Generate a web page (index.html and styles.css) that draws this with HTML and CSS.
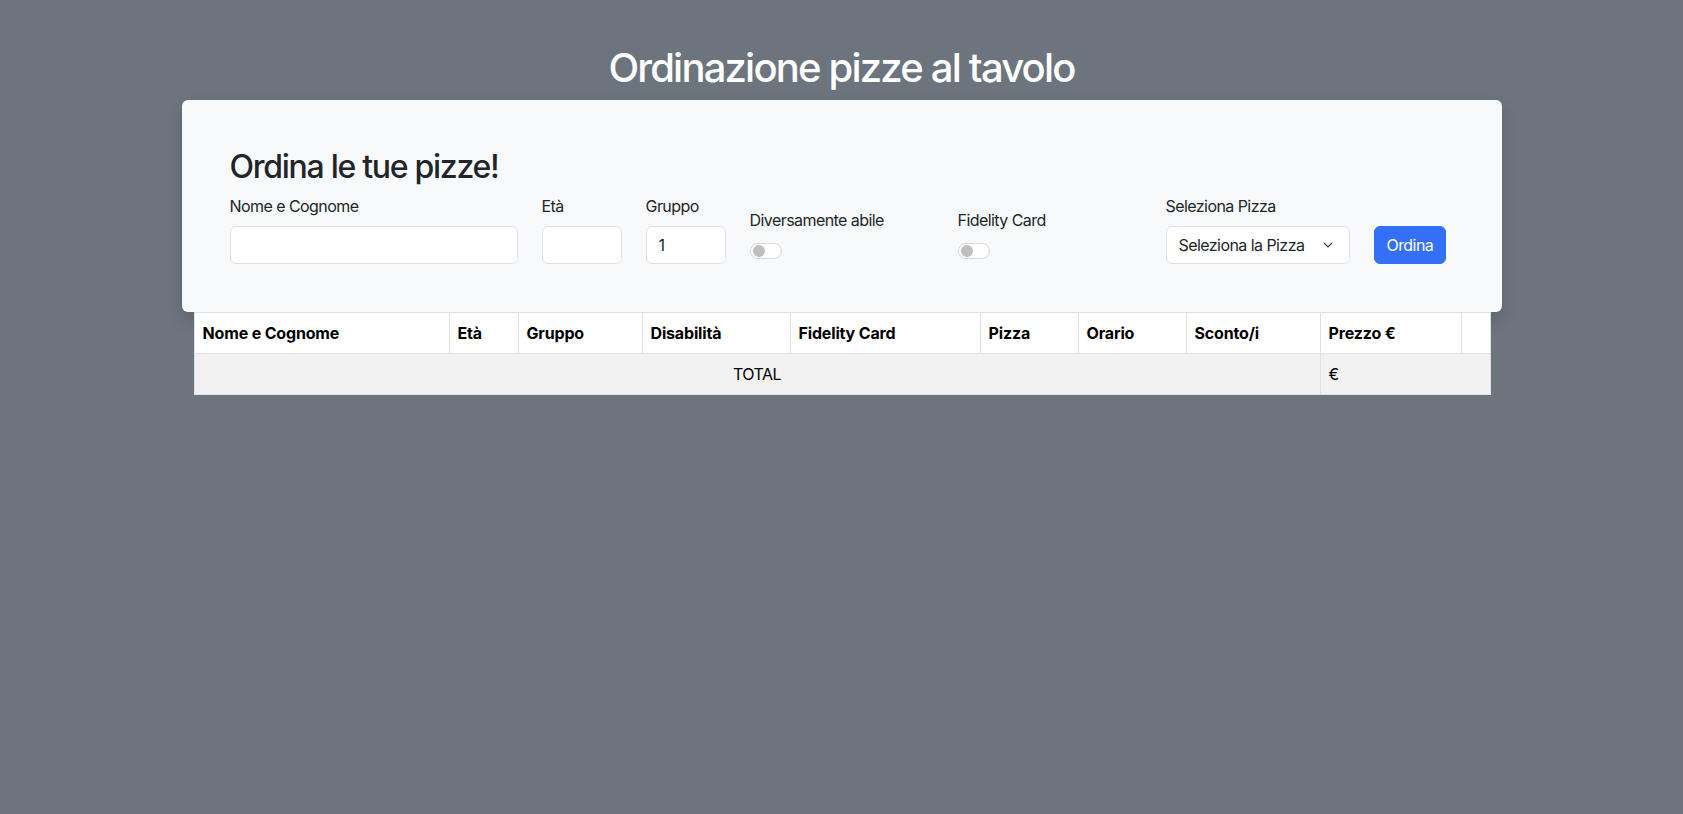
FILE: index.html
```html
<!DOCTYPE html>
<html lang="it">
<head>
<meta charset="utf-8">
<title>Ordinazione pizze al tavolo</title>
<link rel="stylesheet" href="styles.css">
</head>
<body>
<h1 class="page-title">Ordinazione pizze al tavolo</h1>
<div class="order-card">
  <h2 class="order-title">Ordina le tue pizze!</h2>
  <form class="order-row">
    <div class="col col-3">
      <label class="form-label" for="nome">Nome e Cognome</label>
      <input class="form-control" id="nome" type="text">
    </div>
    <div class="col col-1">
      <label class="form-label" for="eta">Età</label>
      <input class="form-control" id="eta" type="text">
    </div>
    <div class="col col-1">
      <label class="form-label" for="gruppo">Gruppo</label>
      <input class="form-control" id="gruppo" type="text" value="1">
    </div>
    <div class="col col-2">
      <label class="form-label switch-label">Diversamente abile</label>
      <span class="switch"><span class="knob"></span></span>
    </div>
    <div class="col col-2">
      <label class="form-label switch-label">Fidelity Card</label>
      <span class="switch"><span class="knob"></span></span>
    </div>
    <div class="col col-2">
      <label class="form-label" for="pizza">Seleziona Pizza</label>
      <div class="select-wrap">
        <select class="form-select" id="pizza">
          <option>Seleziona la Pizza</option>
        </select>
        <svg class="chevron" width="16" height="12" viewBox="0 0 16 16"><path fill="none" stroke="#343a40" stroke-linecap="round" stroke-linejoin="round" stroke-width="1.8" d="m3 5.5 5 5 5-5"/></svg>
      </div>
    </div>
    <div class="col col-1">
      <button type="button" class="btn-primary">Ordina</button>
    </div>
  </form>
</div>
<div class="table-wrap">
  <table class="orders">
    <thead>
      <tr>
        <th class="w-nome">Nome e Cognome</th>
        <th class="w-eta">Età</th>
        <th class="w-gruppo">Gruppo</th>
        <th class="w-dis">Disabilità</th>
        <th class="w-fid">Fidelity Card</th>
        <th class="w-pizza">Pizza</th>
        <th class="w-orario">Orario</th>
        <th class="w-sconto">Sconto/i</th>
        <th class="w-prezzo">Prezzo €</th>
        <th class="w-x"></th>
      </tr>
    </thead>
    <tbody>
      <tr class="total-row">
        <td colspan="8" class="total-label">TOTAL</td>
        <td colspan="2">€</td>
      </tr>
    </tbody>
  </table>
</div>
</body>
</html>
```

FILE: styles.css
```css
* { box-sizing: border-box; }

html, body {
  margin: 0;
  padding: 0;
}

body {
  background: #6c757d;
  font-family: Inter, "Noto Sans", "Liberation Sans", sans-serif;
  font-size: 16px;
  line-height: 1.5;
  color: #212529;
  letter-spacing: -0.035em;
}

.page-title {
  margin: 44px 0 8px;
  text-align: center;
  color: #ffffff;
  font-size: 40px;
  font-weight: 450;
  line-height: 1.2;
  letter-spacing: -0.045em;
}

.order-card {
  width: 1320px;
  margin: 0 auto;
  padding: 48px;
  background: #f8f9fa;
  border-radius: 6px;
  box-shadow: 0 8px 16px rgba(0, 0, 0, 0.15);
}

.order-title {
  margin: 0 0 8px;
  font-size: 32px;
  font-weight: 500;
  line-height: 1.2;
  letter-spacing: -0.04em;
}

.order-row {
  display: flex;
  align-items: flex-end;
  margin: 0 -12px;
}

.col {
  padding: 0 12px;
  display: flex;
  flex-direction: column;
}

.col-1 { width: 104px; }
.col-2 { width: 208px; }
.col-3 { width: 312px; }

.form-label {
  display: block;
  margin-bottom: 8px;
}

.switch-label {
  margin-bottom: 11px;
}

.form-control,
.form-select {
  display: block;
  width: 100%;
  height: 38px;
  padding: 6px 12px;
  font-family: inherit;
  font-size: 16px;
  line-height: 1.5;
  letter-spacing: -0.035em;
  color: #212529;
  background: #ffffff;
  border: 1px solid #dee2e6;
  border-radius: 6px;
  appearance: none;
}

.select-wrap {
  position: relative;
}

.form-select {
  padding-right: 36px;
}

.chevron {
  position: absolute;
  right: 14px;
  top: 13px;
  pointer-events: none;
}

.switch {
  display: block;
  width: 32px;
  height: 16px;
  margin-bottom: 5px;
  border: 1px solid #d6d9dc;
  border-radius: 16px;
  background: #ffffff;
  padding: 1px 2px;
}

.knob {
  display: block;
  width: 12px;
  height: 12px;
  border-radius: 50%;
  background: #bfbfbf;
}

.btn-primary {
  align-self: flex-start;
  height: 38px;
  padding: 6px 12px;
  font-family: inherit;
  font-size: 16px;
  line-height: 1.5;
  letter-spacing: -0.035em;
  color: #ffffff;
  background: #3370f5;
  border: 1px solid #3370f5;
  border-radius: 6px;
}

.table-wrap {
  width: 1320px;
  margin: 0 auto;
  padding: 0 12px;
}

.orders {
  width: 100%;
  border-collapse: collapse;
  background: #ffffff;
  table-layout: fixed;
}

.orders th,
.orders td {
  padding: 8px;
  border: 1px solid #dee2e6;
  text-align: left;
  vertical-align: top;
  color: #000000;
}

.orders th {
  font-weight: 700;
  letter-spacing: -0.01em;
}

.orders td {
  background: #f2f2f2;
}

.orders .total-label {
  text-align: center;
}

.w-nome { width: 255px; }
.w-eta { width: 69px; }
.w-gruppo { width: 124px; }
.w-dis { width: 148px; }
.w-fid { width: 190px; }
.w-pizza { width: 98px; }
.w-orario { width: 108px; }
.w-sconto { width: 134px; }
.w-prezzo { width: 141px; }
.w-x { width: 29px; }
```
